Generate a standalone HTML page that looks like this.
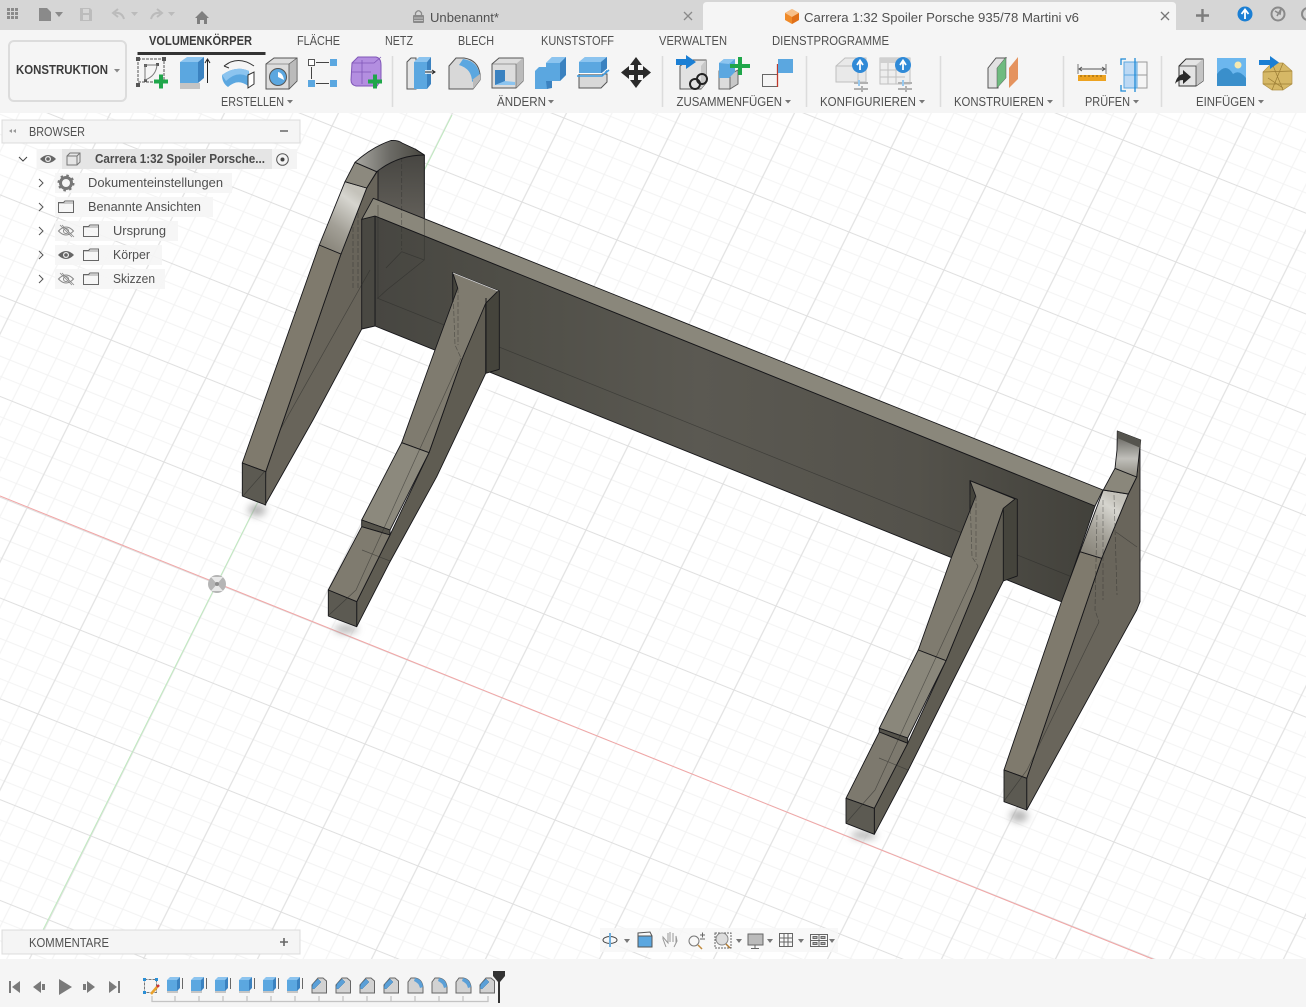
<!DOCTYPE html>
<html><head><meta charset="utf-8"><title>Carrera 1:32 Spoiler Porsche 935/78 Martini v6</title>
<style>
html,body{margin:0;padding:0;background:#fff;overflow:hidden}
svg{display:block}
text{font-family:"Liberation Sans",sans-serif;font-size:12.5px;fill:#505050}
.b{font-weight:bold;fill:#3c3c3c}
.m{stroke:#17171a;stroke-width:.9;stroke-linejoin:round}
.h{fill:none;stroke:#2a2a28;stroke-width:.7;stroke-dasharray:5 2;opacity:.5}
.t{fill:none;stroke:#2a2a28;stroke-width:.7;opacity:.55}
</style></head><body>
<svg width="1306" height="1007" viewBox="0 0 1306 1007" xmlns="http://www.w3.org/2000/svg">
<defs>
<pattern id="g" patternUnits="userSpaceOnUse" width="100" height="100" patternTransform="matrix(.95 .38 -.42 .84 190.5 523)">
<path d="M10 0V100M30 0V100M70 0V100M90 0V100M0 10H100M0 30H100M0 70H100M0 90H100" stroke="#f2f2f2" stroke-width="1" fill="none"/>
<path d="M50 0V100M0 50H100" stroke="#dfdfdf" stroke-width="1.100" fill="none"/>
</pattern>
<filter id="bs"><feGaussianBlur stdDeviation="4"/></filter>
<linearGradient id="pl" x1="0" y1="0" x2="1" y2="0"><stop offset="0" stop-color="#474641"/><stop offset=".18" stop-color="#4f4e47"/><stop offset=".45" stop-color="#5b5952"/><stop offset=".75" stop-color="#54524b"/><stop offset="1" stop-color="#42413b"/></linearGradient>
<linearGradient id="sh" x1="0" y1="1" x2=".5" y2="0"><stop offset="0" stop-color="#7f7b70"/><stop offset=".45" stop-color="#a3a097"/><stop offset=".85" stop-color="#d6d5cf"/><stop offset="1" stop-color="#c4c2ba"/></linearGradient>
<linearGradient id="cv" x1="0" y1="0" x2="1" y2="0"><stop offset="0" stop-color="#a8a7a1"/><stop offset=".5" stop-color="#6c6b66"/><stop offset="1" stop-color="#47463f"/></linearGradient>
<linearGradient id="dk" x1="0" y1="0" x2="0" y2="1"><stop offset="0" stop-color="#454440"/><stop offset="1" stop-color="#63605a"/></linearGradient>
<linearGradient id="cv2" x1="0" y1="0" x2="0" y2="1"><stop offset="0" stop-color="#55544e"/><stop offset=".6" stop-color="#c0bfba"/><stop offset="1" stop-color="#8c897f"/></linearGradient>
<symbol id="te" viewBox="0 0 18 18" overflow="visible"><rect x="0" y="13" width="11" height="3" fill="#c6c6c6"/><rect x="0" y="3" width="10" height="11" fill="#5ba7e0"/><path d="M0 3 3 0H13L10 3Z" fill="#8cc4ef"/><path d="M10 3 13 0V11L10 14Z" fill="#3b82c0"/><path d="M15.500 12V1" stroke="#444" stroke-width=".8" fill="none"/></symbol>
<symbol id="tc" viewBox="0 0 18 18" overflow="visible"><path d="M1 8 7 1H12L15.500 4V16H1Z" fill="#d2d2d2" stroke="#666"/><path d="M1 11 2 7 7 2 10 5 3 12Z" fill="#5ba0d8" stroke="#3b7fb5" stroke-width=".5"/></symbol>
<symbol id="tf" viewBox="0 0 18 18" overflow="visible"><path d="M1 16V5L4 1H8Q15 2 16 10V16Z" fill="#d2d2d2" stroke="#666"/><path d="M8 1Q15 2 16 10L13 11Q12 6 7 4Z" fill="#5ba0d8"/></symbol>
<symbol id="fo" viewBox="0 0 16 13" overflow="visible"><path d="M.5 2.500H5.500L7 1H15.500V12.500H.5Z" fill="none" stroke="#666" stroke-width="1"/><path d="M.5 3H15.500" stroke="#666" stroke-width=".6"/></symbol>
<symbol id="eye" viewBox="0 0 16 10" overflow="visible"><path d="M0 5Q8-3 16 5 8 13 0 5Z" fill="#666"/><circle cx="8" cy="5" r="3" fill="#eee"/><circle cx="8" cy="5" r="1.800" fill="#666"/></symbol>
<symbol id="eyx" viewBox="0 0 16 12" overflow="visible"><path d="M.5 6Q8-2 15.500 6 8 14 .5 6Z" fill="none" stroke="#888"/><circle cx="8" cy="6" r="2.500" fill="none" stroke="#888"/><path d="M2 0 14 12M4 0 16 12" stroke="#888" stroke-width=".8"/></symbol>
</defs>

<!-- viewport -->
<rect width="1306" height="1007" fill="#fff"/>
<rect width="1306" height="1007" fill="url(#g)"/>
<path d="M0 496 1155 960" stroke="#f2a5a5" stroke-width="1" fill="none"/>
<path d="M452 115 42 932" stroke="#bfeabf" stroke-width="1" fill="none"/>
<circle cx="217" cy="584" r="9" fill="#b5b5b5"/>
<path d="M217 584 211 577H223ZM217 584 211 591H223Z" fill="#e9e9e9"/><circle cx="217" cy="584" r="2" fill="#8e8e8e"/>

<!-- halo + shadows -->
<g filter="url(#bs)" fill="none" stroke="#fff" stroke-width="16" stroke-linejoin="round">
<path d="M265 505 361 329 375 326 1061 601M357 627 437 477 486 373M874 834 953 680 1003 581M1027 810 1137 610"/>
</g>
<g filter="url(#bs)" fill="#9a9a9a" opacity=".75">
<ellipse cx="257" cy="510" rx="9" ry="6"/><ellipse cx="346" cy="629" rx="12" ry="4"/><ellipse cx="864" cy="835" rx="13" ry="4"/><ellipse cx="1019" cy="816" rx="9" ry="6"/>
</g>

<!-- leg 1 side / back -->
<path class="m" d="M265.700 471.700 341 254 366.700 188 377 171.700Q395 153 415 149L424.300 155V218L361.700 329 313 420 265 505Z" fill="#68645a"/>
<path class="m" d="M378 170Q395 153 415 149L424.300 155V222L378 205Z" fill="url(#dk)"/>
<!-- plate -->
<path class="m" d="M375 216 1095 506 1062 602 375 326Z" fill="url(#pl)"/>
<path class="m" d="M361.700 219.300 375 216V326L361.700 329Z" fill="#494842"/>
<path class="m" d="M373.300 198.300 1103 490 1095 506 375 216 361.700 219.300Z" fill="#8a877b"/>
<!-- hidden lines leg 1 -->
<path class="t" d="M424.300 218V260L386.700 290 378 298V205M401.700 251.700 424.300 260M401.700 251.700 386 268M377 298 1117 595"/>
<path class="h" d="M401.700 150V250M353 185V290M358 185V290"/>
<path class="t" d="M243 496 370 270"/>
<!-- leg 1 top -->
<path class="m" d="M242.300 463 319.300 245 341 254 265.700 471.700Z" fill="#7f7a6d"/>
<path class="m" d="M319.300 245 345 181.700 366.700 188 341 254Z" fill="url(#sh)"/>
<path class="m" d="M345 181.700 355 162.300 376.700 171.700 366.700 188Z" fill="#8c897e"/>
<path class="m" d="M355 162.300Q372 147 391 140.500 398 140 402 143L415 149 424.300 155Q398 155 376.700 171.700Z" fill="url(#cv)"/>
<path class="m" d="M242.300 463 265.700 471.700V505L242.300 496Z" fill="#5c5a52"/>
<path class="t" d="M243 496 265 471"/>

<!-- leg 2 -->
<path class="m" d="M452.700 272.700 499.300 291V369.300L485.700 373.300 453 360Z" fill="#45443c"/>
<path class="m" d="M356.700 601.700V626.700L389.300 563 436.700 476.700 485.700 373.300V298.300L461.700 360 429 452.700 390 535Z" fill="#5f5c52"/>
<path class="m" d="M452.700 272.700 498 291 485.700 303.300 461.700 360 429 452.700 401.700 442.700 435 350 453.300 300 457.700 288Z" fill="#7f7b6f"/>
<path d="M453 273 498 291" stroke="#ddd" stroke-width=".7"/>
<path class="m" d="M401.700 442.700 429 452.700 390 530 361.700 520Z" fill="#8c897d"/>
<path class="m" d="M361.700 520 390 530V535L361.700 526.700Z" fill="#55534b"/>
<path class="m" d="M361.700 526.700 390 535 356.700 601.700 328.300 590Z" fill="#7f7b6f"/>
<path class="m" d="M328.300 590 356.700 601.700V626.700L328.300 616Z" fill="#5c5a52"/>
<path class="h" d="M453 290 455 345 461 358M458 288V345"/>
<path class="t" d="M329 615 356 590 461 358M362 550 390 561"/>
<path d="M486 298V373" stroke="#17171a"/>

<!-- leg 3 -->
<path class="m" d="M970 480.700 1017.300 499.300V576L1003.300 581 970 565Z" fill="#45443c"/>
<path class="m" d="M874.300 808.300V834.300L908.300 770 953.300 680 1003.300 581V508.300L975 590 946 660.700 907.700 743.300Z" fill="#5f5c52"/>
<path class="m" d="M970 480.700 1015 499 1003.300 508.300 975 590 946 660.700 918.300 650 951.700 556.700 975.700 496Z" fill="#7f7b6f"/>
<path class="m" d="M918.300 650 946 660.700 907.700 738 879.300 728.300Z" fill="#8a877b"/>
<path class="m" d="M879.300 728.300 907.700 738V743.300L879.300 732Z" fill="#55534b"/>
<path class="m" d="M879.300 732 907.700 743.300 874.300 808.300 846 798.300Z" fill="#7d796e"/>
<path class="m" d="M846 798.300 874.300 808.300V834.300L846 823.300Z" fill="#5c5a52"/>
<path class="h" d="M970 495 972 557 978 566M976 496V560"/>
<path class="t" d="M846 823 875 790 978 566M879 758 908 770"/>

<!-- leg 4 -->
<path class="m" d="M1026.700 778.300 1101.700 558.300 1128.300 494 1136.700 477 1140 440V601.700L1136.700 610 1026.700 810Z" fill="#69655b"/>
<path class="m" d="M1004 770 1061.700 601 1080 551.700 1101.700 558.300 1026.700 778.300Z" fill="#7f7a6d"/>
<path class="m" d="M1080 551.700 1103.300 490 1128.300 494 1101.700 558.300Z" fill="url(#sh)"/>
<path class="m" d="M1103.300 490 1115 468.300 1136.700 477 1128.300 494Z" fill="#8a877b"/>
<path class="m" d="M1117.300 431 1140.700 440 1136.700 477 1115 468.300 1117 450Z" fill="url(#cv2)"/>
<path d="M1117.300 431 1140.700 440V448L1117.300 438Z" fill="#55544e"/>
<path class="m" d="M1004 770 1026.700 778.300V810L1004 801.700Z" fill="#5c5a52"/>
<path class="h" d="M1097 515 1095 610 1099 622M1114 495 1117 595M1103 500V600"/>
<path class="t" d="M1004 801 1027 770 1099 622M1116 532 1137 547"/>

<!-- bottom viewport nav -->
<rect x="600" y="928" width="238" height="24" fill="#f6f6f6" opacity=".8"/>
<g fill="none" stroke="#666" stroke-width="1">
<ellipse cx="610" cy="940" rx="7" ry="3.500" stroke="#444"/><path d="M610 933V947" stroke="#6fb0e0" stroke-width="2"/>
<rect x="638" y="936" width="14" height="11" fill="#5ba7e0" stroke="#555"/><path d="M638 936V933L650 932 652 936" stroke="#555"/>
<path d="M666 947 663 939V937L668 943V933M670 942V932M673 942V933M676 943V936L677 941 674 947Z" stroke="#999"/>
<circle cx="694" cy="941" r="5" stroke="#777"/><path d="M698 945 702 949" stroke="#c08a3e" stroke-width="1.500"/><path d="M700 935h5M702.500 932.500v5M700 939h5" stroke="#666"/>
<rect x="715" y="933" width="16" height="15" stroke-dasharray="2 1"/><circle cx="722" cy="939" r="6" fill="#ddd" stroke="#888"/><path d="M726 944 730 948" stroke="#b07a30" stroke-width="1.500"/>
<rect x="748" y="934" width="15" height="11" fill="#bbb" stroke="#666"/><path d="M755 945V948M751 948.500H759"/>
<path d="M779.500 933.500H792.500V946.500H779.500ZM779.500 938H792.500M779.500 942H792.500M784 933.500V946.500M788 933.500V946.500"/>
<path d="M810.500 934.500H827.500V946.500H810.500ZM810.500 940.500H827.500M819 934.500V946.500"/><path d="M813 936.500h4v2h-4zM821 936.500h4v2h-4zM813 942.500h4v2h-4zM821 942.500h4v2h-4z" fill="#bbb"/>
</g>
<g fill="#777"><path d="M624 939h6l-3 4zM736 939h6l-3 4zM767 939h6l-3 4zM798 939h6l-3 4zM829 939h6l-3 4z"/></g>

<!-- top tab bar -->
<rect x="0" y="0" width="1306" height="31" fill="#d6d6d6"/>
<path d="M703 31V6Q703 2 707 2H1172Q1176 2 1176 6V31Z" fill="#f5f5f5"/>
<rect x="0" y="30" width="1306" height="83" fill="#f5f5f5"/>
<g fill="#8a8a8a"><path d="M7 8h3v3H7zM11 8h3v3h-3zM15 8h3v3h-3zM7 12h3v3H7zM11 12h3v3h-3zM15 12h3v3h-3zM7 16h3v3H7zM11 16h3v3h-3zM15 16h3v3h-3z"/>
<path d="M39 8H47L51 12V21H39Z"/><path d="M55 12h8l-4 5z"/></g>
<path d="M80 8H90L92 10V21H80Z" fill="#bcbcbc"/><rect x="83" y="9" width="6" height="4" fill="#d6d6d6"/><rect x="83" y="15" width="6" height="5" fill="#d6d6d6"/>
<path d="M124 19Q122 12 115 13M118 9 113 13 118 17" fill="none" stroke="#bbb" stroke-width="2"/><path d="M131 12h7l-3.500 4z" fill="#bbb"/>
<path d="M151 19Q153 12 160 13M157 9 162 13 157 17" fill="none" stroke="#bbb" stroke-width="2"/><path d="M168 12h7l-3.500 4z" fill="#bbb"/>
<path d="M195 18 202 11 209 18H207V24H204V20H200V24H197V18Z" fill="#7f7f7f"/>
<rect x="413" y="15" width="11" height="8" rx="1" fill="#8a8a8a"/><path d="M415.500 15V13Q418.500 8.500 421.500 13V15" fill="none" stroke="#8a8a8a" stroke-width="1.300"/><path d="M414 18h9M414 20.500h9" stroke="#d6d6d6" stroke-width=".8"/>
<text x="430" y="22" textLength="69" lengthAdjust="spacingAndGlyphs">Unbenannt*</text>
<path d="M684 12 692 20M692 12 684 20" stroke="#8a8a8a" stroke-width="1.300"/>
<path d="M792 9 799 13V20L792 24 785 20V13Z" fill="#f08a28"/><path d="M792 9 799 13 792 17 785 13Z" fill="#f7c08a"/><path d="M792 17 799 13V20L792 24Z" fill="#e0701a"/>
<text x="804" y="22" textLength="275" lengthAdjust="spacingAndGlyphs">Carrera 1:32 Spoiler Porsche 935/78 Martini v6</text>
<path d="M1161 12 1169 20M1169 12 1161 20" stroke="#777" stroke-width="1.300"/>
<path d="M1196 15.500H1209M1202.500 9V22" stroke="#7d7d7d" stroke-width="2.400"/>
<circle cx="1245" cy="14" r="7.500" fill="#1b7fd4"/><path d="M1245 19V11M1241.500 14 1245 9.500 1248.500 14" fill="none" stroke="#fff" stroke-width="1.800"/>
<circle cx="1278" cy="14" r="6.500" fill="#d6d6d6" stroke="#8a8a8a" stroke-width="2"/><path d="M1275 11 1280 14 1281 9 1277 16" fill="none" stroke="#8a8a8a" stroke-width="1.600"/>
<circle cx="1308" cy="14" r="6" fill="none" stroke="#8a8a8a" stroke-width="2"/>

<!-- tabs row -->
<text class="b" x="149" y="45" textLength="103" lengthAdjust="spacingAndGlyphs">VOLUMENKÖRPER</text>
<text x="297" y="45" textLength="43" lengthAdjust="spacingAndGlyphs">FLÄCHE</text>
<text x="385" y="45" textLength="28" lengthAdjust="spacingAndGlyphs">NETZ</text>
<text x="458" y="45" textLength="36" lengthAdjust="spacingAndGlyphs">BLECH</text>
<text x="541" y="45" textLength="73" lengthAdjust="spacingAndGlyphs">KUNSTSTOFF</text>
<text x="659" y="45" textLength="68" lengthAdjust="spacingAndGlyphs">VERWALTEN</text>
<text x="772" y="45" textLength="117" lengthAdjust="spacingAndGlyphs">DIENSTPROGRAMME</text>
<rect x="137.500" y="52" width="128" height="3" fill="#333"/>
<rect x="9" y="41" width="117" height="60" rx="5" fill="#f5f5f5" stroke="#dcdcdc" stroke-width="2"/>
<text class="b" x="16" y="74" textLength="92" lengthAdjust="spacingAndGlyphs">KONSTRUKTION</text>
<path d="M114 69h6l-3 3.500z" fill="#888"/>
<path d="M392.500 56V107M662.500 56V107M806.500 56V107M940.500 56V107M1063.500 56V107M1161.500 56V107" stroke="#dcdcdc" stroke-width="1.500"/>

<text x="221" y="106" textLength="63" lengthAdjust="spacingAndGlyphs">ERSTELLEN</text>
<text x="497" y="106" textLength="49" lengthAdjust="spacingAndGlyphs">ÄNDERN</text>
<text x="676.500" y="106" textLength="105.500" lengthAdjust="spacingAndGlyphs">ZUSAMMENFÜGEN</text>
<text x="820" y="106" textLength="96" lengthAdjust="spacingAndGlyphs">KONFIGURIEREN</text>
<text x="954" y="106" textLength="90" lengthAdjust="spacingAndGlyphs">KONSTRUIEREN</text>
<text x="1085" y="106" textLength="45" lengthAdjust="spacingAndGlyphs">PRÜFEN</text>
<text x="1196" y="106" textLength="59" lengthAdjust="spacingAndGlyphs">EINFÜGEN</text>
<path d="M287 100h6l-3 3.500zM548 100h6l-3 3.500zM785 100h6l-3 3.500zM919 100h6l-3 3.500zM1047 100h6l-3 3.500zM1133 100h6l-3 3.500zM1258 100h6l-3 3.500z" fill="#777"/>

<!-- ERSTELLEN icons -->
<path d="M138 59H164V82H138Z" fill="none" stroke="#555" stroke-dasharray="3 1"/>
<path d="M136 57h4v4h-4zM162 57h4v4h-4zM136 83h4v4h-4zM144 64h3v3h-3zM156 63h3v3h-3zM144 79h3v3h-3z" fill="#555"/>
<path d="M145 65H157Q156 76 145 80Z" fill="none" stroke="#777"/>
<path d="M154 81.500H168M161 74.500V88.500" stroke="#1fa64a" stroke-width="4"/>
<rect x="180" y="83" width="20" height="6" fill="#c4c4c4"/>
<rect x="180" y="62" width="18" height="21" fill="#5ba7e0"/><path d="M180 62 187 57H204L198 62Z" fill="#8cc4ef"/><path d="M198 62 204 57V78L198 83Z" fill="#3b82c0"/>
<path d="M207.500 83V60M205 63l2.500-4 2.500 4" stroke="#222" fill="none"/>
<path d="M222 75Q236 65 249 71L248 86Q238 78 228 87 222 83 222 75Z" fill="#5ba7e0"/><path d="M222 75Q236 65 249 71L247 76Q236 71 226 81Z" fill="#8cc4ef"/><path d="M248 75 254 72V84L248 88Z" fill="#fff" stroke="#333"/><path d="M224 66Q238 55 254 66M224 66l5-3M224 66l5 2" fill="none" stroke="#333"/>
<path d="M266 64 274 58H297V81L289 89H266Z" fill="#ddd" stroke="#555"/><path d="M289 64 297 58V81L289 89Z" fill="#bbb" stroke="#555" stroke-width=".6"/><path d="M266 64H289V89" fill="none" stroke="#555" stroke-width=".6"/>
<circle cx="278" cy="77" r="8.500" fill="#5ba7e0" stroke="#555"/><path d="M278 72Q283 73 284 80L278 77Z" fill="#fff"/>
<rect x="308.500" y="59.500" width="6" height="6" fill="#fff" stroke="#555"/><rect x="330" y="59" width="7" height="7" fill="#5ba7e0"/><rect x="308" y="80" width="7" height="7" fill="#5ba7e0"/><rect x="330" y="80" width="7" height="7" fill="#5ba7e0"/><path d="M316 62.500H329M311.500 67V79M316 83.500H329" stroke="#444"/>
<path d="M352 63 358 57H376Q381 58 381 65V80L377 86H356Q351 85 351 80Z" fill="#b38ee0" stroke="#8057b8"/><path d="M352 72H371M362 60V84M352 63H374L381 57" fill="none" stroke="#8057b8" stroke-width=".8"/><path d="M368 81.500H382M375 74.500V88.500" stroke="#1fa64a" stroke-width="4"/>

<!-- AENDERN icons -->
<path d="M407 89V62L411 58H416V89Z" fill="#e4e4e4" stroke="#555"/><rect x="414" y="62" width="13" height="27" fill="#5ba7e0"/><path d="M414 62 419 57H431L427 62Z" fill="#8cc4ef"/><path d="M427 62 431 57V84L427 89Z" fill="#3b82c0"/><rect x="425" y="70" width="6" height="4" fill="#fff" opacity=".8"/><path d="M425 72H435M432 70l3 2-3 2" stroke="#222" fill="none"/>
<path d="M449 89V66L456 58H464Q478 60 480 74V80L473 89Z" fill="#d8d8d8" stroke="#555"/><path d="M463 59Q478 61 480 76L472 82Q472 69 459 65Z" fill="#5ba7e0"/><path d="M472 80 480 74V80L473 89V80Z" fill="#bbb"/>
<path d="M492 64 499 58H523V81L516 88H492Z" fill="#ddd" stroke="#555"/><path d="M516 64 523 58V81L516 88Z" fill="#bbb"/><path d="M492 64H516V88" fill="none" stroke="#555" stroke-width=".6"/><path d="M495 70H505V82H515V85H495Z" fill="#3b82c0"/><path d="M495 85 505 81 515 82V85Z" fill="#8cc4ef"/>
<path d="M535 71 539 67H551V87L547 89H535Z" fill="#5ba7e0"/><path d="M546 63 552 57H566V75L560 81H546Z" fill="#5ba7e0"/><path d="M546 63 552 57H566L560 63Z" fill="#8cc4ef"/><path d="M560 63 566 57V75L560 81Z" fill="#3b82c0"/><path d="M546 81H552V88L547 89Z" fill="#3b82c0"/>
<path d="M579 74V88H601L607 82V74Z" fill="#d8d8d8" stroke="#555"/>
<path d="M579 62 585 57H607V71L601 74H579Z" fill="#5ba7e0"/><path d="M579 62 585 57H607L601 62Z" fill="#8cc4ef"/><path d="M601 62 607 57V71L601 74Z" fill="#3b82c0"/><path d="M577 76H602L609 70" stroke="#3b9ae0" stroke-width="1.500" fill="none"/><path d="M577 73.500H602L609 67.500" stroke="#fff" stroke-width="1" fill="none"/>
<path d="M636 57 642 65H638V70H643V66L651 72.500 643 79V75H638V80H642L636 88 630 80H634V75H629V79L621 72.500 629 66V70H634V65H630Z" fill="#2a2a2a"/>

<!-- ZUSAMMENFUEGEN -->
<path d="M680 66 689 60H706V83L701 89H680Z" fill="#e2e2e2" stroke="#555"/><path d="M701 66 706 60V83L701 89Z" fill="#c8c8c8"/>
<path d="M676 59H686V55L696 62 686 69V65H676Z" fill="#1b7fd4"/>
<circle cx="695" cy="84" r="5" fill="none" stroke="#222" stroke-width="2"/><circle cx="702" cy="79" r="5" fill="none" stroke="#222" stroke-width="2"/>
<path d="M719 71H730V89H719Z" fill="#dcdcdc" stroke="#666"/><path d="M730 74 738 70V84L730 89Z" fill="#c8c8c8" stroke="#666"/><path d="M719 63 724 59H735V72L729 78H719Z" fill="#5ba7e0"/><path d="M719 63 724 59H735L729 64Z" fill="#8cc4ef"/><path d="M730 66H750M740 57V75" stroke="#1fa64a" stroke-width="4"/>
<rect x="762.500" y="74.500" width="15" height="12" fill="none" stroke="#666"/><path d="M777.500 64V87" stroke="#c0392b" stroke-width="1.300"/><rect x="778" y="59" width="15" height="14" fill="#5ba7e0"/>

<!-- KONFIGURIEREN (faded) -->
<g opacity=".9"><path d="M836 66 845 58H866V82H836Z" fill="#e8e8e8" stroke="#bbb"/><path d="M836 66H858V82" fill="none" stroke="#bbb"/>
<path d="M854 83H868M854 89H868" stroke="#aaa" stroke-width="2"/><path d="M859 80V86" stroke="#8cc4ef" stroke-width="2"/><path d="M862 86V92" stroke="#aaa" stroke-width="2"/>
<circle cx="860" cy="65" r="8" fill="#1b7fd4"/><path d="M860 70V62M857 65 860 60.500 863 65" fill="none" stroke="#fff" stroke-width="1.800"/>
<rect x="880" y="58" width="30" height="26" fill="#eee" stroke="#bbb"/><rect x="880" y="58" width="30" height="5" fill="#ccc"/><path d="M880 70H905M880 77H905M888 63V84M896 63V84" stroke="#bbb"/>
<path d="M898 83H912M898 89H912" stroke="#aaa" stroke-width="2"/><path d="M903 80V86" stroke="#8cc4ef" stroke-width="2"/><path d="M906 86V92" stroke="#aaa" stroke-width="2"/>
<circle cx="903" cy="65" r="8" fill="#1b7fd4"/><path d="M903 70V62M900 65 903 60.500 906 65" fill="none" stroke="#fff" stroke-width="1.800"/></g>

<!-- KONSTRUIEREN -->
<path d="M988 68 996 58H1006L998 68V88H988Z" fill="#e2e2e2" stroke="#555"/><path d="M997 68 1006 57V78L997 88Z" fill="#6fbb7f" stroke="#555" stroke-width=".5"/><path d="M1009 68 1018 57V79L1009 88Z" fill="#e5935e"/>
<!-- PRUEFEN -->
<path d="M1078 64V74M1106 64V74" stroke="#777"/><path d="M1079 69H1105M1082 67l-3 2 3 2M1102 67l3 2-3 2" stroke="#555" fill="none"/><rect x="1078" y="75" width="28" height="6" fill="#eda321"/><path d="M1081 75v2M1085 75v2M1089 75v2M1093 75v2M1097 75v2M1101 75v2" stroke="#8a5c0c"/>
<rect x="1124" y="62" width="13" height="13" fill="#bcd9f4"/><rect x="1124" y="75" width="13" height="13" fill="#bcd9f4"/><path d="M1137 62H1147V88H1137M1137 75H1147" fill="none" stroke="#999"/><path d="M1124 62H1137V88H1124ZM1124 75H1137" fill="none" stroke="#5ba7e0"/><path d="M1126 59H1121V65M1126 91H1121V85M1135 58V92" fill="none" stroke="#1f8ad6" stroke-width="1.300"/>
<!-- EINFUEGEN -->
<path d="M1179 66 1186 59H1203V81L1196 86H1179Z" fill="#e4e4e4" stroke="#333"/><path d="M1196 65 1203 59V81L1196 86Z" fill="#c4c4c4"/><path d="M1179 66H1196V86" fill="none" stroke="#333" stroke-width=".7"/><path d="M1175 84Q1177 75 1183 74V70L1191 77 1183 84V80Q1178 80 1175 84Z" fill="#2a2a2a"/>
<rect x="1217" y="58" width="29" height="28" fill="#6cb7ee"/><circle cx="1238" cy="65" r="3.500" fill="#f6e9b0"/><path d="M1217 86V74Q1226 62 1233 74 1239 69 1246 78V86Z" fill="#3a8fcb"/>
<path d="M1263 72 1272 63H1283L1292 71V84L1283 90H1272L1263 84Z" fill="#d6b866" stroke="#b3944a" stroke-width=".7"/><path d="M1263 72 1292 71M1272 63 1283 90M1283 63 1272 90M1263 84 1292 84M1268 78 1283 88" stroke="#9a7c34" stroke-width=".7"/><path d="M1259 60H1270V56L1279 62.500 1270 69V65H1259Z" fill="#1b7fd4"/>

<!-- BROWSER -->
<rect x="2" y="120" width="298" height="23" fill="#f5f5f5" stroke="#dcdcdc"/>
<path d="M12 129v4l-3-2zM16 129v4l-3-2z" fill="#999"/>
<text x="29" y="136" textLength="56" lengthAdjust="spacingAndGlyphs">BROWSER</text>
<path d="M280 131H288" stroke="#666" stroke-width="1.500"/>
<rect x="36.500" y="149" width="260.500" height="20" fill="#f3f3f3" opacity=".95"/>
<rect x="62" y="149" width="210" height="20" fill="#e5e5e5"/>
<path d="M19 157 23 161 27 157" fill="none" stroke="#444"/>
<use href="#eye" x="40" y="154" width="16" height="10"/>
<path d="M67 156 70 153H80V162L77 165H67Z M67 156H77V165M77 156 80 153" fill="none" stroke="#777"/>
<text class="b" x="95" y="163" textLength="170" lengthAdjust="spacingAndGlyphs" style="fill:#4a4a4a">Carrera 1:32 Spoiler Porsche...</text>
<circle cx="282.500" cy="159.500" r="5.800" fill="none" stroke="#555" stroke-width="1"/><circle cx="282.500" cy="159.500" r="2" fill="#444"/>
<rect x="55" y="173" width="177" height="20" fill="#f5f5f5" opacity=".9"/>
<rect x="55" y="197" width="158" height="20" fill="#f5f5f5" opacity=".9"/>
<rect x="55" y="221" width="123" height="20" fill="#f5f5f5" opacity=".9"/>
<rect x="55" y="245" width="107" height="20" fill="#f5f5f5" opacity=".9"/>
<rect x="55" y="269" width="110" height="20" fill="#f5f5f5" opacity=".9"/>
<path d="M39 179 43 183 39 187M39 203 43 207 39 211M39 227 43 231 39 235M39 251 43 255 39 259M39 275 43 279 39 283" fill="none" stroke="#555"/>
<circle cx="66" cy="183" r="5.500" fill="none" stroke="#777" stroke-width="3"/><circle cx="66" cy="183" r="7.500" fill="none" stroke="#777" stroke-width="2" stroke-dasharray="2.500 3.400"/>
<use href="#fo" x="58" y="200" width="16" height="13"/>
<use href="#eyx" x="58" y="225" width="16" height="12"/>
<use href="#fo" x="83" y="224" width="16" height="13"/>
<use href="#eye" x="58" y="250" width="16" height="10"/>
<use href="#fo" x="83" y="248" width="16" height="13"/>
<use href="#eyx" x="58" y="273" width="16" height="12"/>
<use href="#fo" x="83" y="272" width="16" height="13"/>
<text x="88" y="187" textLength="135" lengthAdjust="spacingAndGlyphs">Dokumenteinstellungen</text>
<text x="88" y="211" textLength="113" lengthAdjust="spacingAndGlyphs">Benannte Ansichten</text>
<text x="113" y="235" textLength="53" lengthAdjust="spacingAndGlyphs">Ursprung</text>
<text x="113" y="259" textLength="37" lengthAdjust="spacingAndGlyphs">Körper</text>
<text x="113" y="283" textLength="42" lengthAdjust="spacingAndGlyphs">Skizzen</text>

<!-- KOMMENTARE -->
<rect x="2" y="930" width="298" height="24" fill="#f5f5f5" stroke="#dcdcdc"/>
<text x="29" y="947" textLength="80" lengthAdjust="spacingAndGlyphs">KOMMENTARE</text>
<path d="M280 942H288M284 938V946" stroke="#666" stroke-width="1.600"/>

<!-- timeline -->
<rect x="0" y="959" width="1306" height="48" fill="#f5f5f5"/>
<g fill="#7a7a7a"><rect x="9" y="981" width="2" height="12"/><path d="M20 981V993L12 987Z"/><path d="M33 987 41 981V993ZM42 984h3v6h-3z"/><path d="M59 979 72 987 59 995Z"/><path d="M83 984h3v6h-3zM87 981V993L95 987Z"/><path d="M109 981V993L117 987Z"/><rect x="118" y="981" width="2" height="12"/></g>
<path d="M144.500 979.500H156.500V992.500H144.500Z" fill="none" stroke="#777" stroke-dasharray="3 1"/><path d="M143 978h3v3h-3zM155 978h3v3h-3zM143 991h3v3h-3z" fill="#2a8fd6"/><path d="M151 994 157 987" stroke="#e8a12c" stroke-width="2.500"/><path d="M157 987l2-2" stroke="#c33" stroke-width="2.500"/>
<use href="#te" x="167" y="977" width="18" height="18"/>
<use href="#te" x="191" y="977" width="18" height="18"/>
<use href="#te" x="215" y="977" width="18" height="18"/>
<use href="#te" x="239" y="977" width="18" height="18"/>
<use href="#te" x="263" y="977" width="18" height="18"/>
<use href="#te" x="287" y="977" width="18" height="18"/>
<use href="#tc" x="311" y="977" width="18" height="18"/>
<use href="#tc" x="335" y="977" width="18" height="18"/>
<use href="#tc" x="359" y="977" width="18" height="18"/>
<use href="#tc" x="383" y="977" width="18" height="18"/>
<use href="#tf" x="407" y="977" width="18" height="18"/>
<use href="#tf" x="431" y="977" width="18" height="18"/>
<use href="#tf" x="455" y="977" width="18" height="18"/>
<use href="#tc" x="479" y="977" width="18" height="18"/>
<path d="M152 996V1001.500H488V996M175 996V1001M199 996V1001M223 996V1001M247 996V1001M271 996V1001M295 996V1001M319 996V1001M343 996V1001M367 996V1001M391 996V1001M415 996V1001M439 996V1001M463 996V1001" fill="none" stroke="#c4c4c4" stroke-width="1.300"/>
<path d="M493 971H505V976L500 982V1003H498V982L493 976Z" fill="#333"/>
</svg>
</body></html>
